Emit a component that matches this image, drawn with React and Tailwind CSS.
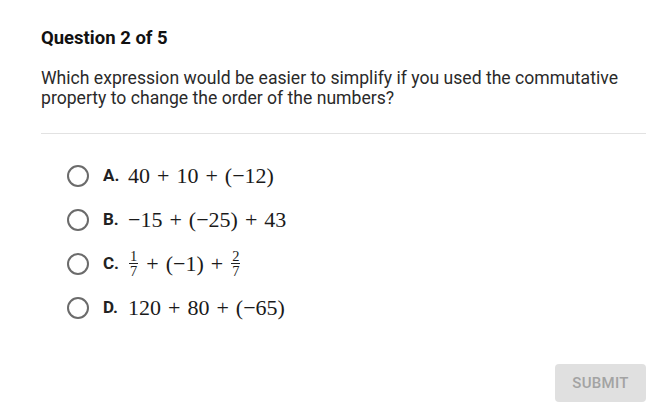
import React from "react";

const Op = ({ children }) => <span className="mx-[7px]">{children}</span>;

const Frac = ({ n, d }) => (
  <span className="inline-flex flex-col items-center align-middle mx-[1px] text-[14.5px] leading-[14px] relative top-[-1px]">
    <span className="px-[1px]">{n}</span>
    <span className="block w-full h-px bg-[#222]" />
    <span className="px-[1px]">{d}</span>
  </span>
);

const options = [
  { l: "A.", m: (<>40<Op>+</Op>10<Op>+</Op>(−12)</>) },
  { l: "B.", m: (<>−15<Op>+</Op>(−25)<Op>+</Op>43</>) },
  { l: "C.", m: (<><Frac n="1" d="7" /><Op>+</Op>(−1)<Op>+</Op><Frac n="2" d="7" /></>) },
  { l: "D.", m: (<>120<Op>+</Op>80<Op>+</Op>(−65)</>) },
];

export default function App() {
  return (
    <div className="w-[667px] h-[406px] bg-white text-[#222] font-['Roboto',sans-serif] relative overflow-hidden">
      <div className="pl-[41px] pr-[21px] pt-[28px]">
        <h1 className="text-[18.5px] font-bold leading-[20px] text-[#111]">Question 2 of 5</h1>
        <p className="mt-[20px] text-[17.6px] leading-[20px] text-[#2a2a2a]">
          Which expression would be easier to simplify if you used the commutative property to change the order of the numbers?
        </p>
        <div className="mt-[25px] h-px bg-[#e2e2e2]" />
        <div className="mt-[30px] flex flex-col gap-[20px] pl-[26px]">
          {options.map((o) => (
            <div key={o.l} className="flex items-center h-[24px]">
              <span className="w-[22px] h-[22px] rounded-full border-2 border-[#6b6b6b] bg-white shrink-0" />
              <span className="ml-[14px] w-[25px] text-[17px] font-bold text-[#222]">{o.l}</span>
              <span className="font-['Liberation_Serif',serif] text-[22px] leading-[24px] text-[#1a1a1a] flex items-center whitespace-nowrap">
                {o.m}
              </span>
            </div>
          ))}
        </div>
      </div>
      <div className="absolute right-[21px] bottom-[4px]">
        <button className="w-[91px] h-[38px] rounded-[4px] bg-[#e0e0e0] text-[#a3a3a3] text-[15px] font-medium tracking-[0.3px]">
          SUBMIT
        </button>
      </div>
    </div>
  );
}
